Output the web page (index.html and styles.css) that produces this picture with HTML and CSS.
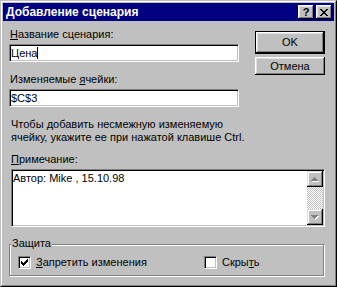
FILE: index.html
```html
<!DOCTYPE html>
<html lang="ru">
<head>
    <meta charset="UTF-8">
    <title>Добавление сценария</title>
    <link rel="stylesheet" href="styles.css">
</head>
<body>
<div class="window">
    <div class="frame">
        <div class="titlebar">
            <span class="title">Добавление сценария</span>
            <span class="caption-btns">
                <span class="cbtn">?</span>
                <span class="cbtn">
                    <svg width="8" height="7" viewBox="0 0 8 7" shape-rendering="crispEdges"><path d="M0 0h2v1H0zM6 0h2v1H6zM1 1h2v1H1zM5 1h2v1H5zM2 2h4v1H2zM3 3h2v1H3zM2 4h4v1H2zM1 5h2v1H1zM5 5h2v1H5zM0 6h2v1H0zM6 6h2v1H6z"/></svg>
                </span>
            </span>
        </div>
        <div class="content">
            <div class="top">
                <div class="fields">
                    <div class="label"><u>Н</u>азвание сценария:</div>
                    <div class="field">Цена<span class="caret"></span></div>
                    <div class="label second">Изменяемые <u>я</u>чейки:</div>
                    <div class="field">$C$3</div>
                </div>
                <div class="buttons">
                    <div class="btn default">OK</div>
                    <div class="btn">Отмена</div>
                </div>
            </div>
            <div class="hint">Чтобы добавить несмежную изменяемую<br>ячейку, укажите ее при нажатой клавише Ctrl.</div>
            <div class="note-label"><u>П</u>римечание:</div>
            <div class="memo">
                <div class="memo-text">Автор: Mike , 15.10.98</div>
                <div class="scrollbar">
                    <div class="sbtn">
                        <svg width="8" height="5" viewBox="0 0 8 5" shape-rendering="crispEdges">
                            <path fill="#fff" transform="translate(1 1)" d="M3 0h1v1h1v1h1v1h1v1H0V3h1V2h1V1h1z"/>
                            <path fill="#808080" d="M3 0h1v1h1v1h1v1h1v1H0V3h1V2h1V1h1z"/>
                        </svg>
                    </div>
                    <div class="track"></div>
                    <div class="sbtn">
                        <svg width="8" height="5" viewBox="0 0 8 5" shape-rendering="crispEdges">
                            <path fill="#fff" transform="translate(1 1)" d="M0 0h7v1H6v1H5v1H4v1H3V3H2V2H1V1H0z"/>
                            <path fill="#808080" d="M0 0h7v1H6v1H5v1H4v1H3V3H2V2H1V1H0z"/>
                        </svg>
                    </div>
                </div>
            </div>
            <div class="group">
                <div class="group-title">Защита</div>
                <div class="checks">
                    <label class="check first">
                        <span class="box">
                            <svg width="7" height="7" viewBox="0 0 7 7" shape-rendering="crispEdges"><path d="M6 0h1v3H6v1H5v1H4v1H3v1H2V6H1V5H0V2h1v1h1v1h1V3h1V2h1V1h1z"/></svg>
                        </span>
                        <span><u>З</u>апретить изменения</span>
                    </label>
                    <label class="check">
                        <span class="box"></span>
                        <span>Скры<u>т</u>ь</span>
                    </label>
                </div>
            </div>
        </div>
    </div>
</div>
</body>
</html>
```

FILE: styles.css
```css
* { box-sizing: border-box; }
body { margin: 0; background: #c0c0c0; font-family: "Liberation Sans", Arial, sans-serif; font-size: 11px; line-height: 13px; color: #000; }
u { text-underline-offset: 1px; }

.window { width: 337px; height: 287px; border: 1px solid; border-color: #c0c0c0 #000 #000 #c0c0c0; background: #c0c0c0; }
.frame { height: 100%; border: 1px solid; border-color: #fff #808080 #808080 #fff; padding: 1px; }

.titlebar { height: 18px; background: #000080; color: #fff; display: flex; align-items: center; justify-content: space-between; padding: 0 2px 0 3px; }
.title { font-weight: bold; font-size: 12px; line-height: 18px; }
.caption-btns { display: flex; gap: 2px; }
.cbtn { width: 16px; height: 14px; background: #c0c0c0; color: #000; font-weight: bold; font-size: 11px; line-height: 14px; display: flex; align-items: center; justify-content: center; box-shadow: inset -1px -1px #000, inset 1px 1px #fff, inset -2px -2px #808080, inset 2px 2px #dfdfdf; }

.content { padding: 7px 9px 0 6px; }
.top { display: flex; gap: 16px; }
.fields { width: 230px; }
.label { padding-left: 1px; }
.label.second { margin-top: 11px; }
.field { height: 18px; margin-top: 3px; padding: 2px 1px 0; background: #fff; border: 1px solid; border-color: #808080 #fff #fff #808080; box-shadow: inset 1px 1px #000, inset -1px -1px #c0c0c0; white-space: nowrap; }
.caret { display: inline-block; width: 1px; height: 12px; background: #000; vertical-align: -2px; }

.buttons { width: 70px; margin-top: 3px; display: flex; flex-direction: column; gap: 3px; }
.btn { height: 18px; display: flex; align-items: center; justify-content: center; background: #c0c0c0; box-shadow: inset -1px -1px #000, inset 1px 1px #fff, inset -2px -2px #808080, inset 2px 2px #dfdfdf; }
.btn.default { height: 23px; border: 1px solid #000; }

.hint { margin-top: 11px; padding-left: 2px; }
.note-label { margin-top: 9px; padding-left: 2px; }

.memo { display: flex; width: 314px; height: 58px; margin: 3px 0 0 2px; background: #fff; border: 1px solid; border-color: #808080 #fff #fff #808080; box-shadow: inset 1px 1px #000, inset -1px -1px #c0c0c0; }
.memo-text { flex: 1; padding: 2px 1px; }
.scrollbar { width: 16px; margin: 1px 1px 1px 0; display: flex; flex-direction: column; }
.sbtn { height: 16px; display: flex; align-items: center; justify-content: center; background: #c0c0c0; box-shadow: inset -1px -1px #000, inset 1px 1px #dfdfdf, inset -2px -2px #808080, inset 2px 2px #fff; }
.track { flex: 1; background: repeating-conic-gradient(#fff 0 25%, #c0c0c0 0 50%) 0 0 / 2px 2px; }

.group { width: 315px; margin-top: 17px; padding: 0 0 6px 8px; border: 1px solid #808080; box-shadow: 1px 1px #fff, inset 1px 1px #fff; }
.group-title { width: fit-content; margin: -8px 0 0 -7px; padding: 0 1px; background: #c0c0c0; }
.checks { display: flex; margin-top: 6px; }
.check { display: flex; align-items: center; gap: 5px; }
.check.first { width: 186px; }
.box { width: 13px; height: 13px; display: flex; align-items: center; justify-content: center; background: #fff; border: 1px solid; border-color: #808080 #fff #fff #808080; box-shadow: inset 1px 1px #000, inset -1px -1px #c0c0c0; }
```
